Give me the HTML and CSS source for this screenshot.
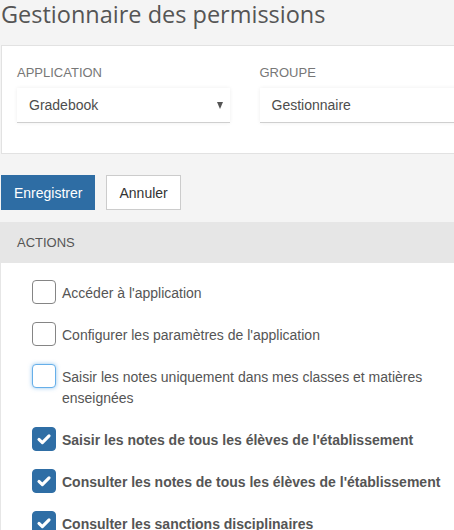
FILE: index.html
```html
<!DOCTYPE html>
<html lang="fr">
<head>
<meta charset="utf-8">
<title>Gestionnaire des permissions</title>
<link rel="stylesheet" href="styles.css">
</head>
<body>
<div class="page">
  <h1 class="title">Gestionnaire des permissions</h1>

  <div class="card">
    <div class="fields">
      <div class="field">
        <div class="field-label">Application</div>
        <div class="select">
          <span>Gradebook</span>
          <span class="caret"></span>
        </div>
      </div>
      <div class="field">
        <div class="field-label">Groupe</div>
        <div class="select">
          <span>Gestionnaire</span>
        </div>
      </div>
    </div>
  </div>

  <div class="toolbar">
    <button class="btn btn-primary" type="button">Enregistrer</button>
    <button class="btn btn-default" type="button">Annuler</button>
  </div>

  <div class="panel">
    <div class="panel-heading">Actions</div>
    <div class="panel-body">
      <div class="check-item">
        <span class="box"></span>
        <span class="check-label">Accéder à l'application</span>
      </div>
      <div class="check-item">
        <span class="box"></span>
        <span class="check-label">Configurer les paramètres de l'application</span>
      </div>
      <div class="check-item">
        <span class="box focused"></span>
        <span class="check-label">Saisir les notes uniquement dans mes classes et matières enseignées</span>
      </div>
      <div class="check-item checked">
        <span class="box"><svg viewBox="0 0 24 24" width="24" height="24"><path d="M6.5 12.5 L10.2 16 L17.5 8.6" fill="none" stroke="#fff" stroke-width="3.4" stroke-linecap="round" stroke-linejoin="round"/></svg></span>
        <span class="check-label">Saisir les notes de tous les élèves de l'établissement</span>
      </div>
      <div class="check-item checked">
        <span class="box"><svg viewBox="0 0 24 24" width="24" height="24"><path d="M6.5 12.5 L10.2 16 L17.5 8.6" fill="none" stroke="#fff" stroke-width="3.4" stroke-linecap="round" stroke-linejoin="round"/></svg></span>
        <span class="check-label">Consulter les notes de tous les élèves de l'établissement</span>
      </div>
      <div class="check-item checked">
        <span class="box"><svg viewBox="0 0 24 24" width="24" height="24"><path d="M6.5 12.5 L10.2 16 L17.5 8.6" fill="none" stroke="#fff" stroke-width="3.4" stroke-linecap="round" stroke-linejoin="round"/></svg></span>
        <span class="check-label">Consulter les sanctions disciplinaires</span>
      </div>
    </div>
  </div>
</div>
</body>
</html>
```

FILE: styles.css
```css
html, body {
  margin: 0;
  padding: 0;
  overflow: hidden;
}

body {
  background: #f4f4f4;
  font-family: "Liberation Sans", Arial, sans-serif;
  font-size: 14px;
  color: #555;
}

.page {
  width: 488px;
  box-sizing: border-box;
  padding-left: 1px;
}

.title {
  width: fit-content;
  margin: 0 0 18px;
  padding-top: 1px;
  font-family: "Open Sans", sans-serif;
  font-weight: 400;
  font-size: 23.5px;
  line-height: 26px;
  color: #555;
}

.card {
  background: #fff;
  border: 1px solid #e2e2e2;
  padding: 18px 15px 30px;
  margin-bottom: 21px;
}

.fields {
  display: grid;
  grid-template-columns: 1fr 1fr;
  column-gap: 30px;
}

.field-label {
  font-size: 13px;
  line-height: 18px;
  text-transform: uppercase;
  color: #777;
  margin-bottom: 6px;
}

.select {
  height: 35px;
  box-sizing: border-box;
  display: flex;
  align-items: center;
  justify-content: space-between;
  padding: 0 7px 0 12px;
  background: #fff;
  border-bottom: 1px solid #cfcfcf;
  box-shadow: 0 0 4px rgba(0, 0, 0, 0.07);
  font-size: 14px;
  color: #4d4d4d;
}

.caret {
  width: 0;
  height: 0;
  border-left: 3.5px solid transparent;
  border-right: 3.5px solid transparent;
  border-top: 7px solid #555;
  margin-top: 1px;
}

.toolbar {
  display: flex;
  gap: 11px;
  margin-bottom: 12px;
}

.btn {
  height: 35px;
  padding: 0 12px;
  font-family: "Liberation Sans", Arial, sans-serif;
  font-size: 14px;
  border: 1px solid transparent;
  border-radius: 0;
  cursor: pointer;
}

.btn-primary {
  background: #2e6da4;
  border-color: #2e6da4;
  color: #fff;
}

.btn-default {
  background: #fff;
  border-color: #cccccc;
  color: #333;
}

.panel {
  background: #fff;
  border-left: 1px solid #e6e6e6;
  margin-left: -1px;
  padding-left: 1px;
}

.panel-heading {
  background: #e6e6e6;
  height: 41px;
  line-height: 41px;
  padding-left: 16px;
  margin-left: -1px;
  font-size: 13px;
  text-transform: uppercase;
  color: #555;
}

.panel-body {
  padding: 17px 0 20px 30px;
  display: flex;
  flex-direction: column;
  gap: 18px;
}

.check-item {
  display: flex;
  align-items: flex-start;
  gap: 6px;
}

.box {
  flex: none;
  width: 24px;
  height: 24px;
  box-sizing: border-box;
  border: 1px solid #858585;
  border-radius: 4px;
  background: #fff;
  display: flex;
  align-items: center;
  justify-content: center;
}

.box svg {
  display: block;
}

.box.focused {
  border-color: #66afe9;
  box-shadow: 0 0 4px rgba(102, 175, 233, 0.7);
}

.check-item.checked .box {
  background: #2f6ea5;
  border-color: #2f6ea5;
}

.check-label {
  padding-top: 3px;
  line-height: 21px;
  font-size: 14px;
  color: #555;
}

.check-item.checked .check-label {
  font-weight: 700;
}
```
